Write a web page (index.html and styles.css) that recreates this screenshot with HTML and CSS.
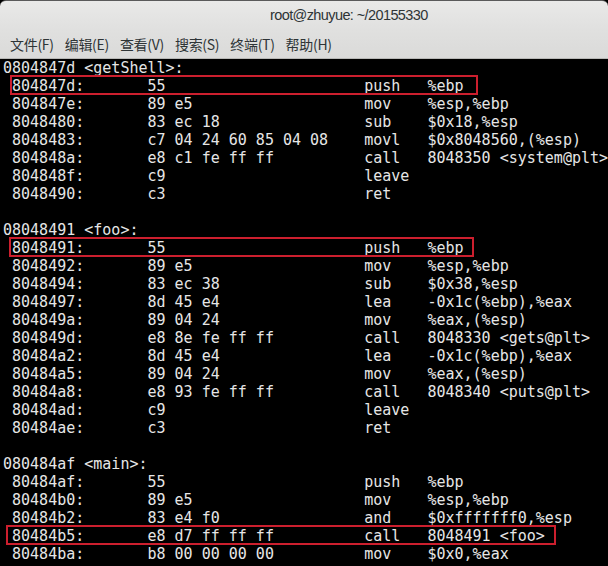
FILE: index.html
```html
<!DOCTYPE html>
<html lang="zh">
<head>
<meta charset="utf-8">
<title>root@zhuyue: ~/20155330</title>
<link rel="stylesheet" href="styles.css">
</head>
<body>
<div class="window">
  <header class="titlebar">
    <span class="title">root@zhuyue: ~/20155330</span>
  </header>
  <nav class="menubar">
    <span class="menu-item">文件(F)</span>
    <span class="menu-item">编辑(E)</span>
    <span class="menu-item">查看(V)</span>
    <span class="menu-item">搜索(S)</span>
    <span class="menu-item">终端(T)</span>
    <span class="menu-item">帮助(H)</span>
  </nav>
  <main class="terminal">
    <div class="label">0804847d &lt;getShell&gt;:</div>
    <div class="ins hl hl-a"><span> 804847d:</span><span>55</span><span>push</span><span>%ebp</span></div>
    <div class="ins"><span> 804847e:</span><span>89 e5</span><span>mov</span><span>%esp,%ebp</span></div>
    <div class="ins"><span> 8048480:</span><span>83 ec 18</span><span>sub</span><span>$0x18,%esp</span></div>
    <div class="ins"><span> 8048483:</span><span>c7 04 24 60 85 04 08</span><span>movl</span><span>$0x8048560,(%esp)</span></div>
    <div class="ins"><span> 804848a:</span><span>e8 c1 fe ff ff</span><span>call</span><span>8048350 &lt;system@plt&gt;</span></div>
    <div class="ins"><span> 804848f:</span><span>c9</span><span>leave</span><span></span></div>
    <div class="ins"><span> 8048490:</span><span>c3</span><span>ret</span><span></span></div>
    <div class="blank"></div>
    <div class="label">08048491 &lt;foo&gt;:</div>
    <div class="ins hl hl-b"><span> 8048491:</span><span>55</span><span>push</span><span>%ebp</span></div>
    <div class="ins"><span> 8048492:</span><span>89 e5</span><span>mov</span><span>%esp,%ebp</span></div>
    <div class="ins"><span> 8048494:</span><span>83 ec 38</span><span>sub</span><span>$0x38,%esp</span></div>
    <div class="ins"><span> 8048497:</span><span>8d 45 e4</span><span>lea</span><span>-0x1c(%ebp),%eax</span></div>
    <div class="ins"><span> 804849a:</span><span>89 04 24</span><span>mov</span><span>%eax,(%esp)</span></div>
    <div class="ins"><span> 804849d:</span><span>e8 8e fe ff ff</span><span>call</span><span>8048330 &lt;gets@plt&gt;</span></div>
    <div class="ins"><span> 80484a2:</span><span>8d 45 e4</span><span>lea</span><span>-0x1c(%ebp),%eax</span></div>
    <div class="ins"><span> 80484a5:</span><span>89 04 24</span><span>mov</span><span>%eax,(%esp)</span></div>
    <div class="ins"><span> 80484a8:</span><span>e8 93 fe ff ff</span><span>call</span><span>8048340 &lt;puts@plt&gt;</span></div>
    <div class="ins"><span> 80484ad:</span><span>c9</span><span>leave</span><span></span></div>
    <div class="ins"><span> 80484ae:</span><span>c3</span><span>ret</span><span></span></div>
    <div class="blank"></div>
    <div class="label">080484af &lt;main&gt;:</div>
    <div class="ins"><span> 80484af:</span><span>55</span><span>push</span><span>%ebp</span></div>
    <div class="ins"><span> 80484b0:</span><span>89 e5</span><span>mov</span><span>%esp,%ebp</span></div>
    <div class="ins"><span> 80484b2:</span><span>83 e4 f0</span><span>and</span><span>$0xfffffff0,%esp</span></div>
    <div class="ins hl hl-c"><span> 80484b5:</span><span>e8 d7 ff ff ff</span><span>call</span><span>8048491 &lt;foo&gt;</span></div>
    <div class="ins"><span> 80484ba:</span><span>b8 00 00 00 00</span><span>mov</span><span>$0x0,%eax</span></div>
  </main>
</div>
</body>
</html>
```
FILE: styles.css
```css
html, body {
  margin: 0;
  padding: 0;
  background: #000;
}
body {
  width: 608px;
  height: 566px;
  overflow: hidden;
}
.window {
  display: flex;
  flex-direction: column;
  height: 566px;
}
.titlebar {
  flex-shrink: 0;
  height: 30px;
  border-radius: 6px 6px 0 0;
  border-top: 1px solid #5a5a5a;
  background: linear-gradient(#e9e9e8, #e0e0df);
  display: flex;
  align-items: center;
  padding-left: 270px;
  box-sizing: border-box;
}
.title {
  font-family: "Liberation Sans", "Noto Sans CJK SC", sans-serif;
  font-size: 14.5px;
  color: #2e3436;
  letter-spacing: -0.6px;
  margin-top: -1px;
}
.menubar {
  flex-shrink: 0;
  height: 28px;
  background: linear-gradient(#e0e0df, #dadad9);
  border-bottom: 1px solid #b8b8b6;
  display: flex;
  align-items: center;
  padding-left: 10px;
  gap: 11px;
}
.menu-item {
  font-family: "Noto Sans CJK SC", sans-serif;
  font-size: 14px;
  color: #2e3436;
  letter-spacing: -0.3px;
}
.terminal {
  flex: 1;
  min-height: 0;
  background: #000;
  color: #e6e6e6;
  font-family: "DejaVu Sans Mono", monospace;
  font-size: 15px;
  line-height: 18px;
  padding-left: 3px;
}
.label, .blank {
  height: 18px;
  white-space: pre;
}
.ins {
  display: grid;
  grid-template-columns: 16ch 24ch 7ch auto;
  height: 18px;
  position: relative;
  white-space: pre;
}
.hl::after {
  content: "";
  position: absolute;
  top: -2px;
  height: 20px;
  border: 2px solid #cc1f2e;
  box-sizing: border-box;
}
.hl-a::after { left: 7px; width: 468px; }
.hl-b::after { left: 6px; width: 465px; }
.hl-c::after { left: 3px; width: 550px; }
```
